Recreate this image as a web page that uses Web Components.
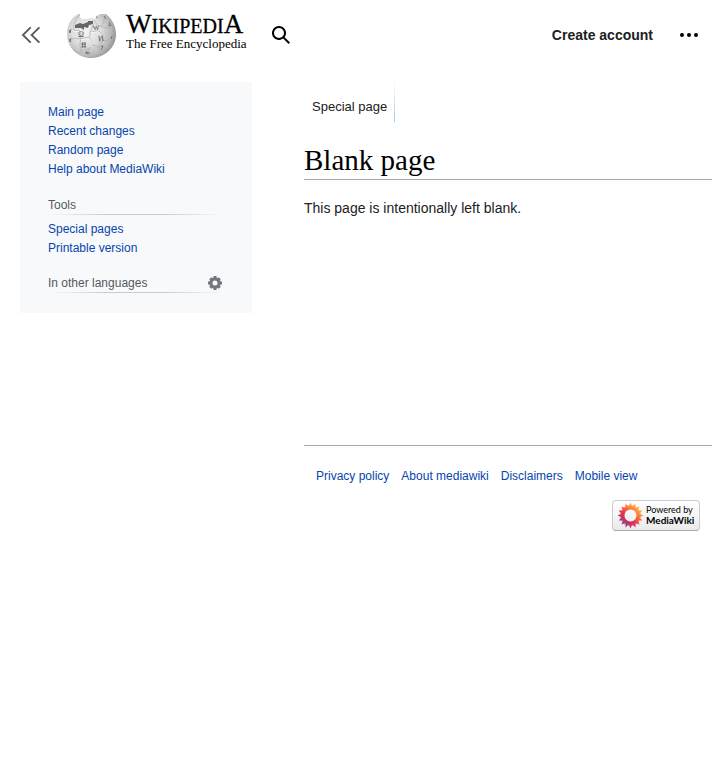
<!DOCTYPE html>
<html lang="en">
<head>
<meta charset="utf-8">
<meta name="viewport" content="width=device-width, initial-scale=1">
<title>Blank page</title>
<style>
html { background: #fff; }
body { margin: 0; font-family: "Liberation Sans", Arial, sans-serif; font-size: 14px; line-height: 22px; color: #202122; }
</style>
</head>
<body>
<wiki-page></wiki-page>
<script>
const define = (name, html, setup) => {
  const template = document.createElement('template');
  template.innerHTML = html;
  customElements.define(name, class extends HTMLElement {
    constructor() {
      super();
      this.attachShadow({ mode: 'open' }).append(template.content.cloneNode(true));
    }
    connectedCallback() { if (setup) setup(this, this.shadowRoot); }
  });
};

define('wiki-globe', `
<style>:host { display: block; width: 50px; height: 50px; } svg { display: block; }</style>
<svg width="50" height="50" viewBox="0 0 50 50" aria-hidden="true">
  <defs>
    <radialGradient id="g" gradientUnits="userSpaceOnUse" cx="20" cy="20" r="32">
      <stop offset="0" stop-color="#f4f4f4"/><stop offset=".45" stop-color="#dedede"/>
      <stop offset=".78" stop-color="#b8b8b8"/><stop offset="1" stop-color="#888"/>
    </radialGradient>
    <clipPath id="c"><path d="M12 3C5 7 1 14 1 23C1 37 12 47 25 47S50 37 50 23C50 15 46 8 40 3L34 3L31 5L29 8L25 7L21 8L16 8L14 6L14 3Z"/></clipPath>
  </defs>
  <g clip-path="url(#c)">
    <rect width="50" height="50" fill="url(#g)"/>
    <path d="M9 14L14 12L17 13L22 11L22 10L27 10L27 13L23 14L22 17L18 16L18 19L15 17L9 17Z" fill="#666"/>
    <path d="M14 3C9 9 7 14 8 19M8 19c3 2 4-1 6 1s-1 4 1 7c-3 2-6-1-9 1M15 27c3 2 5-2 8 0s1 5 3 8M23 27c2-3 0-5 2-8s0-4 3-6M25 20c4 2 5-2 9 1s0 6 3 8 5-1 10 0M28 9c3 3 2 7 6 6s4-6 5-10M34 15c4 1 5 3 12 1M26 35c-2 4-6 2-10 5s-5 1-9-2M15 27c0 4-3 7 1 13M37 29c-1 4-4 3-4 7s2 5-1 11M26 35c3-2 5 1 7 1s6 2 11-1M22 47c-1-4 1-6 0-9" fill="none" stroke="#b3b3b3" stroke-width=".8"/>
    <path d="M15 28c3 2 5-2 8 0s1 5 3 8M25 21c4 2 5-2 9 1s0 6 3 8M8 20c3 2 4-1 6 1" fill="none" stroke="#fafafa" stroke-width=".8"/>
    <g fill="#505050" font-family="Liberation Serif, serif">
      <text x="12" y="26" font-size="8">Ω</text>
      <text x="27" y="19" font-size="7" transform="rotate(-9 30 17)">W</text>
      <text x="32" y="30" font-size="8" transform="rotate(-10 35 27)">И</text>
    </g>
    <path d="M3 19l1 3M5 18l-1 4M3 28l2 3M5 27l-1 4M15 33h5M16 36l4-1M17 31l-1 6M19 31v6M35 35h2l-2 4M19 42h5M20 40l2 3M43 11l2 4M42 14l2 1M28 5l3 1M30 4l1 3M38 5l2 3M46 25l-1 3" fill="none" stroke="#686868" stroke-width=".9"/>
  </g>
</svg>`);

define('wiki-wordmark', `
<style>
:host { display: grid; font-family: "Liberation Serif", "Times New Roman", serif; color: #000; white-space: nowrap; }
.name { height: 26px; font-size: 20px; line-height: 26px; -webkit-text-stroke: 0.3px #000; }
.name b { font-size: 27px; line-height: 26px; font-weight: 400; }
.tag { font-size: 13px; line-height: 14px; }
</style>
<span class="name"><b>W</b>IKIPEDI<b>A</b></span>
<span class="tag">The Free Encyclopedia</span>`);

define('icon-button', `
<style>
:host { display: block; }
button { display: grid; place-items: center; width: 36px; height: 36px; margin: 0; padding: 0; border: 0; background: none; cursor: pointer; color: inherit; }
</style>
<button type="button"><slot></slot></button>`, (host, root) => {
  root.querySelector('button').setAttribute('aria-label', host.getAttribute('label'));
});

define('wiki-header', `
<style>
:host { display: block; }
header { display: flex; align-items: center; height: 70px; padding: 0 13px; }
a { text-decoration: none; color: inherit; }
.logo { display: flex; align-items: center; gap: 10px; margin: 0 16px 0 17px; padding-bottom: 2px; }
wiki-wordmark { margin-bottom: 6px; }
wiki-globe { margin-top: 4px; }
.account { margin-left: auto; margin-right: 18px; font-weight: 700; }
.menu { color: #54595d; } .search, .more { color: #000; }
svg { display: block; }
</style>
<header>
  <icon-button class="menu" label="Toggle sidebar"><svg width="20" height="20" viewBox="0 0 20 20" fill="none" stroke="currentColor" stroke-width="1.8"><path d="M9.7 2.3L1.9 10L9.7 17.7M18.4 2.3L10.6 10L18.4 17.7"/></svg></icon-button>
  <a class="logo" href="#main"><wiki-globe></wiki-globe><wiki-wordmark></wiki-wordmark></a>
  <icon-button class="search" label="Search"><svg width="20" height="20" viewBox="0 0 20 20" fill="currentColor"><path fill-rule="evenodd" d="M12.2 13.6a7 7 0 1 1 1.4-1.4l5.4 5.4-1.4 1.4zM13 8A5 5 0 1 0 3 8a5 5 0 0 0 10 0"/></svg></icon-button>
  <a class="account" href="#account">Create account</a>
  <icon-button class="more" label="More options"><svg width="20" height="20" viewBox="0 0 20 20" fill="currentColor"><circle cx="3" cy="10" r="2"/><circle cx="10" cy="10" r="2"/><circle cx="17" cy="10" r="2"/></svg></icon-button>
</header>`);

define('side-portal', `
<style>
:host { display: block; font-size: 12px; line-height: 19px; }
.head { display: flex; justify-content: space-between; align-items: center; height: 19px; margin-bottom: 5px; color: #54595d;
  background: linear-gradient(to right, rgba(200,204,209,0), #c8ccd1 33%, #c8ccd1 66%, rgba(200,204,209,0)) bottom / 100% 1px no-repeat; }
:host(:not([heading])) .head { display: none; }
h3 { margin: 0; font-size: 12px; font-weight: 400; }
</style>
<div class="head"><h3></h3><slot name="action"></slot></div>
<slot></slot>`, (host, root) => {
  root.querySelector('h3').textContent = host.getAttribute('heading') || '';
});

define('wiki-sidebar', `
<style>
:host { display: block; background: #f8f9fb; }
nav { display: grid; gap: 16px; padding: 21px 28px 15px; }
ul { list-style: none; margin: 0; padding: 0; }
.main { padding-bottom: 1px; }
a { color: #0645ad; text-decoration: none; }
button { display: block; margin: 0 2px 2px 0; padding: 0; border: 0; background: none; color: #72777d; cursor: pointer; }
svg { display: block; }
</style>
<nav aria-label="Site">
  <side-portal><ul class="main">
    <li><a href="#main">Main page</a></li><li><a href="#recent">Recent changes</a></li>
    <li><a href="#random">Random page</a></li><li><a href="#help">Help about MediaWiki</a></li>
  </ul></side-portal>
  <side-portal heading="Tools"><ul>
    <li><a href="#special">Special pages</a></li><li><a href="#print">Printable version</a></li>
  </ul></side-portal>
  <side-portal heading="In other languages">
    <button slot="action" type="button" aria-label="Language settings"><svg width="14" height="14" viewBox="0 0 20 20">
      <g transform="translate(10 10)" fill="none" stroke="currentColor">
        <circle r="5.9" stroke-width="4.6"/>
        <path stroke-width="4.4" d="M0-10V-6M0 6V10M-10 0H-6M6 0H10M-6.8-6.8L-4.5-4.5M6.8 6.8L4.5 4.5M6.8-6.8L4.5-4.5M-6.8 6.8L-4.5 4.5"/>
      </g></svg></button>
  </side-portal>
</nav>`);

define('wiki-article', `
<style>
:host { display: block; min-height: 363px; }
nav { display: flex; height: 40px; }
nav a { box-sizing: border-box; padding: 14px 7px 0 8px; font-size: 13px; line-height: 22px; color: #202122; text-decoration: none;
  border: 0 solid; border-right-width: 1px; border-image: linear-gradient(to bottom, #fff, #8fcdf8) 1; }
h1 { margin: 21px 0 17px; padding-bottom: 1px; border-bottom: 1px solid #a2a9b1; font: 400 29px/35px "Liberation Serif", "Times New Roman", serif; color: #000; }
p { margin: 0; }
</style>
<nav aria-label="Namespaces"><a href="#top">Special page</a></nav>
<h1>Blank page</h1>
<p>This page is intentionally left blank.</p>`);

define('powered-badge', `
<style>
:host { display: block; }
a { box-sizing: border-box; display: flex; align-items: center; gap: 3px; width: 88px; height: 31px; padding-left: 5px; border: 1px solid #c8ccd1; border-bottom-color: #a2a9b1; border-radius: 4px; background: linear-gradient(#fff, #eaeaea); color: #000; text-decoration: none; font: 9px/10px Lato, sans-serif; white-space: nowrap; }
svg { display: block; flex: none; }
.text { display: grid; padding-bottom: 1px; }
b { font-size: 10px; font-weight: 700; }
</style>
<a href="#mediawiki">
  <svg width="25" height="25" viewBox="0 0 25 25" aria-hidden="true">
    <defs>
      <linearGradient id="s" gradientUnits="userSpaceOnUse" x1="4" y1="22" x2="20" y2="3"><stop offset="0" stop-color="#873b91"/><stop offset=".38" stop-color="#e52e52"/><stop offset=".65" stop-color="#fa6c3c"/><stop offset="1" stop-color="#ffb847"/></linearGradient>
      <mask id="m"><rect width="25" height="25" fill="#fff"/><circle cx="12.5" cy="12.5" r="6" fill="#000"/></mask>
    </defs>
    <g mask="url(#m)" fill="url(#s)"><path class="back" opacity=".5"/><path class="front"/></g>
  </svg>
  <span class="text"><span>Powered by</span><b>MediaWiki</b></span>
</a>`, (host, root) => {
  const star = (count, outer, inner, turn) => 'M' + Array.from({ length: count * 2 }, (_, i) => {
    const r = i % 2 ? inner : outer, a = Math.PI * i / count + turn;
    return (12.5 + r * Math.sin(a)).toFixed(2) + ' ' + (12.5 - r * Math.cos(a)).toFixed(2);
  }).join('L') + 'Z';
  root.querySelector('.back').setAttribute('d', star(16, 11, 9, Math.PI / 16));
  root.querySelector('.front').setAttribute('d', star(16, 12.9, 9, 0));
});

define('wiki-footer', `
<style>
:host { display: block; border-top: 1px solid #a2a9b1; padding: 20px 12px; font-size: 12px; line-height: 20px; }
ul { display: flex; flex-wrap: wrap; gap: 0 12px; list-style: none; margin: 0; padding: 0; }
ul a { color: #0645ad; text-decoration: none; }
.badge { display: flex; justify-content: flex-end; margin-top: 14px; }
</style>
<footer>
  <ul><li><a href="#privacy">Privacy policy</a></li><li><a href="#about">About mediawiki</a></li><li><a href="#disclaimers">Disclaimers</a></li><li><a href="#mobile">Mobile view</a></li></ul>
  <div class="badge"><powered-badge></powered-badge></div>
</footer>`);

define('wiki-page', `
<style>
:host { display: block; }
.layout { display: grid; grid-template-columns: 232px minmax(0, 1fr); column-gap: 52px; align-items: start; padding: 12px 8px 0 20px; }
</style>
<wiki-header></wiki-header>
<div class="layout">
  <wiki-sidebar></wiki-sidebar>
  <main><wiki-article></wiki-article><wiki-footer></wiki-footer></main>
</div>`);
</script>
</body>
</html>
